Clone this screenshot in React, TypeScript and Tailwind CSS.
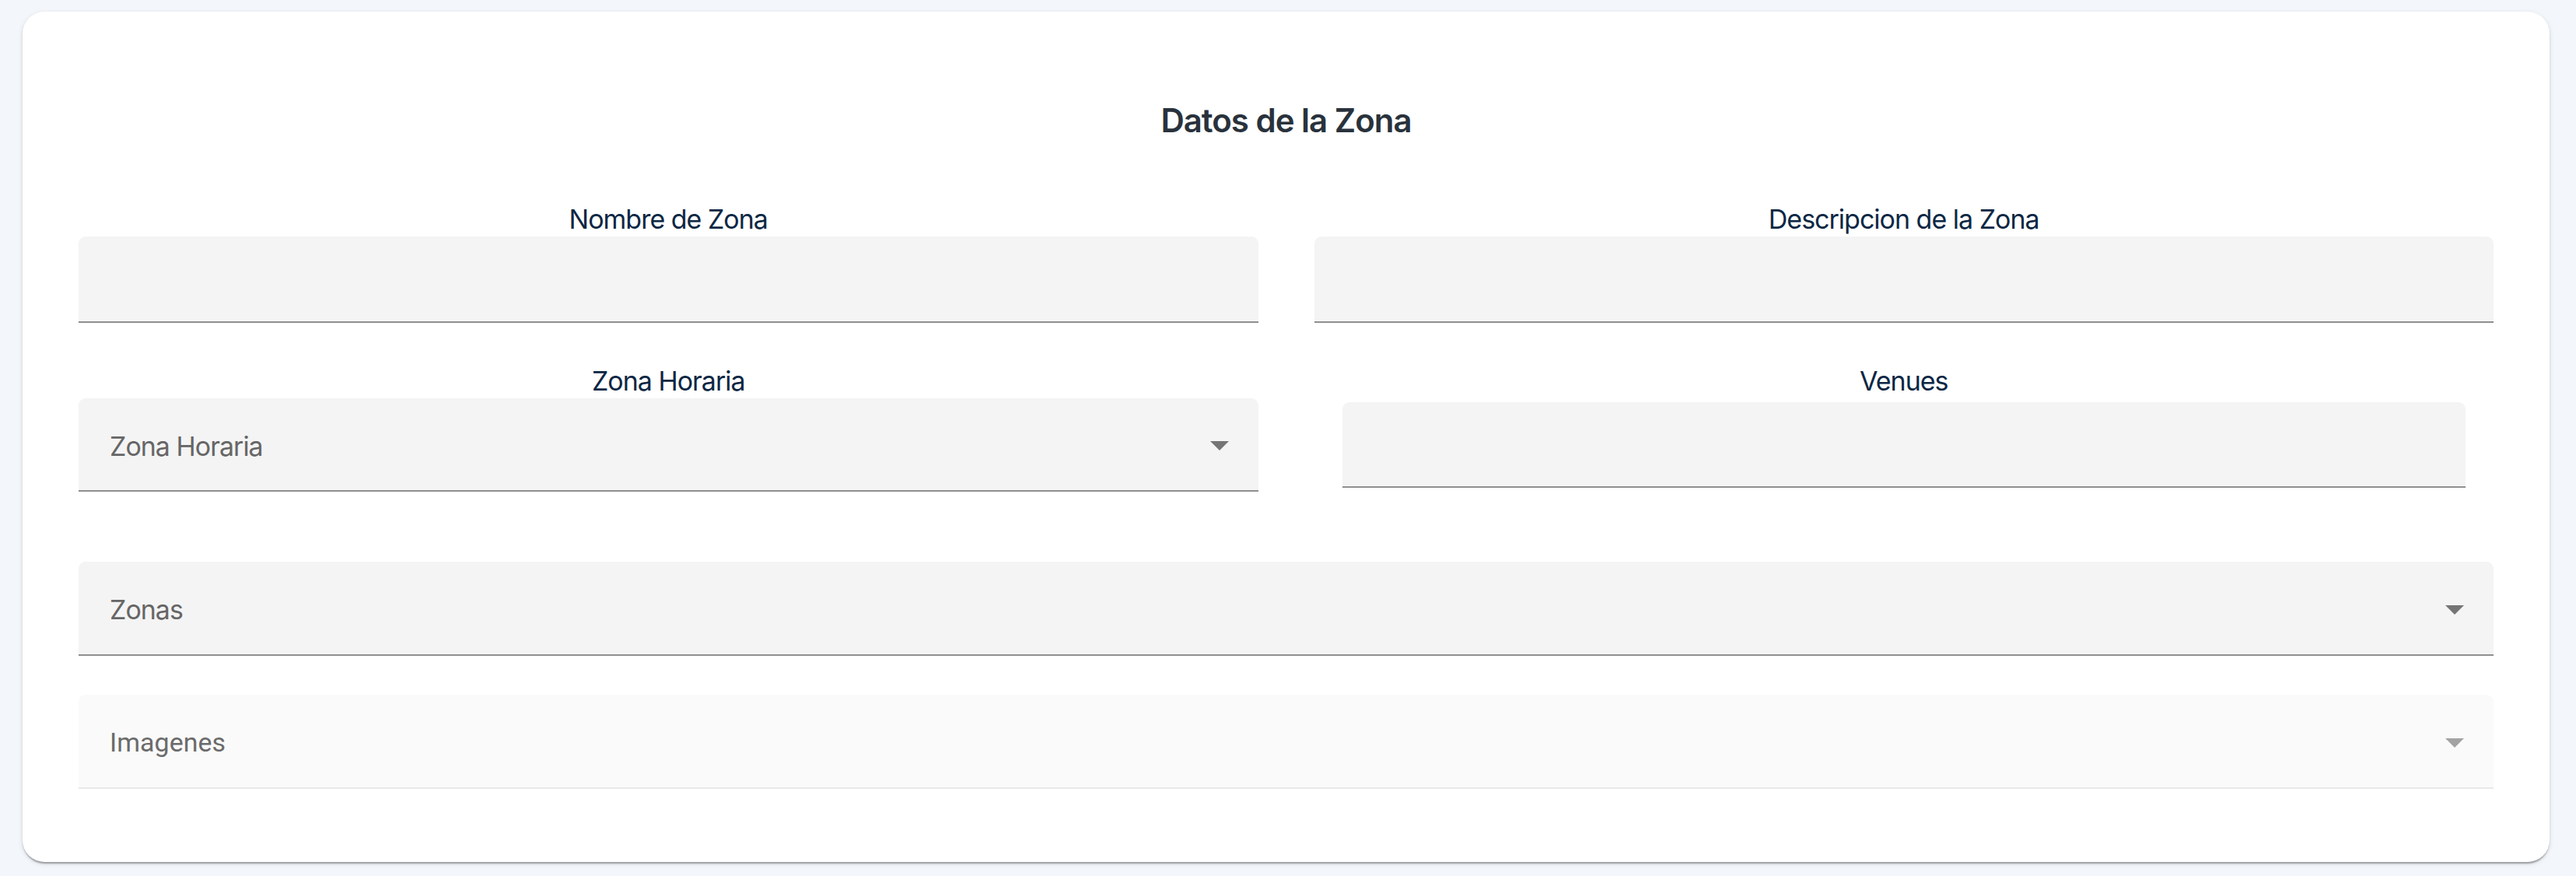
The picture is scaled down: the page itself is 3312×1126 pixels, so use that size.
import type { ReactNode } from 'react'

const labelCls =
  "block text-center text-[34px] leading-[44px] tracking-[-1px] text-[#0c2744] font-['Inter',sans-serif]"

function Arrow({ light }: { light?: boolean }) {
  return (
    <svg width="24" height="12" viewBox="0 0 24 12" className="shrink-0">
      <polygon points="0,0 24,0 12,12" fill={light ? '#a3a3a3' : '#757575'} />
    </svg>
  )
}

function TextField({ className = '' }: { className?: string }) {
  return <div className={`rounded-t-[9px] border-b-2 border-[#8f8f8f] bg-[#f4f4f4] ${className}`} />
}

function SelectField({
  placeholder,
  disabled,
  className = '',
}: {
  placeholder: string
  disabled?: boolean
  className?: string
}) {
  return (
    <div
      className={`flex items-center justify-between rounded-t-[9px] border-b-2 pl-[40px] pr-[38px] pt-[4px] ${
        disabled ? 'border-[#e9e9e9] bg-[#fafafa]' : 'border-[#8f8f8f] bg-[#f4f4f4]'
      } ${className}`}
    >
      <span
        className={
          disabled
            ? "text-[34px] text-[#6b6b6b] font-['Roboto',sans-serif]"
            : "text-[34px] tracking-[-1px] text-[#666666] font-['Inter',sans-serif]"
        }
      >
        {placeholder}
      </span>
      <Arrow light={disabled} />
    </div>
  )
}

function Field({ label, children }: { label: string; children: ReactNode }) {
  return (
    <div className="flex flex-col">
      <label className={labelCls}>{label}</label>
      {children}
    </div>
  )
}

export default function App() {
  return (
    <div className="min-h-screen bg-[#f3f6fa] pt-[15px] pb-[18px] pl-[29px] pr-[34px]">
      <div className="rounded-[28px] bg-white px-[72px] pt-[115px] pb-[94px] shadow-[0_4px_2px_-2px_rgba(0,0,0,0.2),0_2px_2px_0_rgba(0,0,0,0.14),0_2px_6px_0_rgba(0,0,0,0.12)]">
        <h2 className="text-center text-[42px] leading-[50px] font-semibold tracking-[-1px] text-[#29323c] font-['Inter',sans-serif]">
          Datos de la Zona
        </h2>

        <div className="mt-[80px] grid grid-cols-2 gap-x-[72px]">
          <Field label="Nombre de Zona">
            <TextField className="h-[111px]" />
          </Field>
          <Field label="Descripcion de la Zona">
            <TextField className="h-[111px]" />
          </Field>
        </div>

        <div className="mt-[53px] grid grid-cols-2 gap-x-[72px]">
          <Field label="Zona Horaria">
            <SelectField placeholder="Zona Horaria" className="h-[120px]" />
          </Field>
          <Field label="Venues">
            <TextField className="mx-[36px] mt-[5px] h-[110px]" />
          </Field>
        </div>

        <SelectField placeholder="Zonas" className="mt-[90px] h-[121px]" />
        <SelectField placeholder="Imagenes" disabled className="mt-[50px] h-[121px]" />
      </div>
    </div>
  )
}
